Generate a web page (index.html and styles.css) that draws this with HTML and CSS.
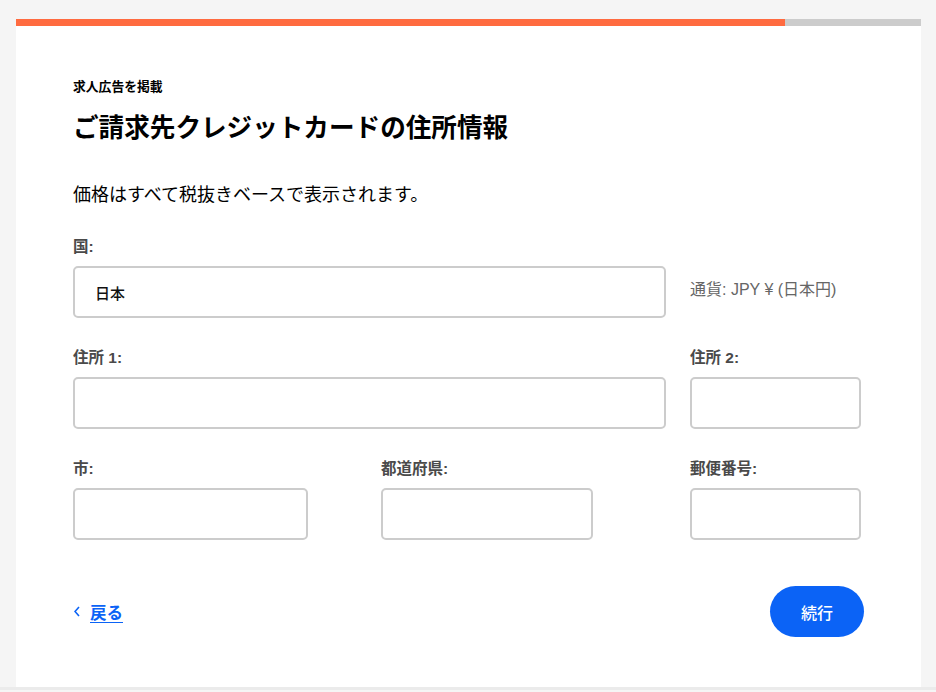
FILE: index.html
```html
<!DOCTYPE html>
<html lang="ja">
<head>
<meta charset="utf-8">
<title>ご請求先クレジットカードの住所情報</title>
<link rel="stylesheet" href="styles.css">
</head>
<body>
<div class="page">
  <div class="card">
    <div class="progress"><div class="progress-fill"></div></div>
    <div class="content">
      <div class="eyebrow">求人広告を掲載</div>
      <h1 class="title">ご請求先クレジットカードの住所情報</h1>
      <p class="note">価格はすべて税抜きベースで表示されます。</p>

      <div class="form">
        <div class="field span2">
          <label class="label">国:</label>
          <div class="input wide country">日本</div>
        </div>
        <div class="field currency-cell">
          <span class="currency">通貨: JPY ¥ (日本円)</span>
        </div>

        <div class="field span2">
          <label class="label">住所 1:</label>
          <div class="input wide"></div>
        </div>
        <div class="field">
          <label class="label">住所 2:</label>
          <div class="input small"></div>
        </div>

        <div class="field">
          <label class="label">市:</label>
          <div class="input city"></div>
        </div>
        <div class="field">
          <label class="label">都道府県:</label>
          <div class="input pref"></div>
        </div>
        <div class="field">
          <label class="label">郵便番号:</label>
          <div class="input small"></div>
        </div>
      </div>

      <div class="actions">
        <a class="back" href="#">
          <svg class="chev" width="6" height="11" viewBox="0 0 6 11"><path d="M5 1 L1 5.5 L5 10" fill="none" stroke="#0b63f6" stroke-width="1.6"/></svg>
          <span class="back-text">戻る</span>
        </a>
        <button class="next">続行</button>
      </div>
    </div>
  </div>
  <div class="footer-line"></div>
</div>
</body>
</html>
```

FILE: styles.css
```css
* { box-sizing: border-box; }
html, body { margin: 0; padding: 0; }
body {
  background: #f5f5f5;
  font-family: "Liberation Sans", "Noto Sans CJK JP", sans-serif;
  color: #000;
}
.page {
  padding: 19px 15px 0 16px;
}
.card {
  background: #fff;
  height: 668px;
}
.progress {
  height: 7px;
  background: #cccccc;
}
.progress-fill {
  width: 769px;
  height: 100%;
  background: #ff6b40;
}
.content {
  padding: 52px 57px 0 57px;
}
.eyebrow {
  font-size: 12.8px;
  font-weight: 700;
  line-height: 18px;
}
.title {
  margin: 14px 0 0 0;
  font-size: 25.6px;
  font-weight: 700;
  line-height: 36px;
}
.note {
  margin: 36px 0 0 0;
  font-size: 18px;
  font-weight: 400;
  line-height: 26px;
}
.form {
  margin-top: 29px;
  display: grid;
  grid-template-columns: 308px 309px 174px;
  row-gap: 30px;
}
.field {
  display: flex;
  flex-direction: column;
}
.span2 { grid-column: span 2; }
.label {
  font-size: 15.5px;
  font-weight: 700;
  color: #4a4a4a;
  line-height: 20px;
  margin-bottom: 9px;
}
.input {
  height: 52px;
  border: 2px solid #cccccc;
  border-radius: 5px;
  background: #fff;
}
.wide { width: 593px; }
.small { width: 171px; }
.city { width: 235px; }
.pref { width: 212px; }
.country {
  display: flex;
  align-items: center;
  padding-left: 20px;
  font-size: 15px;
  font-weight: 500;
  color: #111;
}
.currency-cell {
  justify-content: flex-end;
}
.currency {
  font-size: 16px;
  color: #666;
  height: 52px;
  line-height: 48px;
}
.actions {
  margin-top: 46px;
  display: flex;
  align-items: center;
  justify-content: space-between;
}
.back {
  display: flex;
  align-items: center;
  gap: 10px;
  color: #0b63f6;
  text-decoration: none;
  padding-left: 1px;
}
.back-text {
  font-size: 16.5px;
  font-weight: 700;
  text-decoration: underline;
  text-underline-offset: 3px;
}
.next {
  width: 94px;
  height: 51px;
  border: none;
  border-radius: 26px;
  background: #0b63f6;
  color: #fff;
  font-family: "Liberation Sans", "Noto Sans CJK JP", sans-serif;
  font-size: 16px;
  font-weight: 500;
  margin-right: 0;
}
.footer-line {
  height: 3px;
  background: #ebebeb;
  margin: 0 -15px 0 -16px;
}
```
